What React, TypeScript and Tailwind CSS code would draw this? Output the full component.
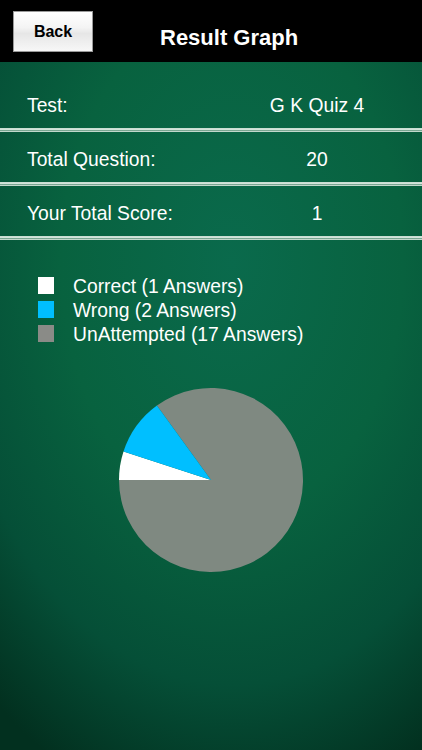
import React from 'react';

const rows = [
  { label: 'Test:', value: 'G K Quiz 4' },
  { label: 'Total Question:', value: '20' },
  { label: 'Your Total Score:', value: '1' },
];

const legend = [
  { color: 'bg-white', text: 'Correct (1 Answers)' },
  { color: 'bg-[#00bfff]', text: 'Wrong (2 Answers)' },
  { color: 'bg-[#8a8b87]', text: 'UnAttempted (17 Answers)' },
];

function PieChart() {
  // center 93,93 radius 92; white 180..162deg, blue 162..126deg, grey the rest
  return (
    <svg width="186" height="186" viewBox="0 0 186 186" className="mx-auto block">
      <path d="M93 93 L38.9 18.6 A92 92 0 1 1 1 93 Z" fill="#7f8981" />
      <path d="M93 93 L1 93 A92 92 0 0 1 5.5 64.6 Z" fill="#ffffff" />
      <path d="M93 93 L5.5 64.6 A92 92 0 0 1 38.9 18.6 Z" fill="#00bfff" />
    </svg>
  );
}

export default function App() {
  return (
    <div
      className="h-screen w-full overflow-hidden flex flex-col bg-[radial-gradient(ellipse_90%_75%_at_55%_35%,#0a6a4c_0%,#08623f_45%,#054f37_75%,#02301f_100%)] text-white"
      style={{ fontFamily: '"Liberation Sans", Arial, sans-serif' }}
    >
      {/* header */}
      <div className="h-[62px] bg-black flex items-start shrink-0">
        <button className="mt-[11px] ml-[13px] w-[80px] h-[41px] border border-[#9a9a9a] bg-[linear-gradient(to_bottom,#ffffff_0%,#f4f4f4_40%,#e6e6e6_55%,#f7f7f7_100%)] text-black font-bold text-[16px] leading-[40px] pb-[2px]">
          Back
        </button>
        <h1 className="mt-[25px] ml-[67px] text-[22px] leading-[26px] font-bold">Result Graph</h1>
      </div>

      {/* info rows */}
      <div className="pt-[16px]">
        {rows.map((r) => (
          <div key={r.label}>
            <div className="flex h-[50px] pt-[17px] text-[19.3px] leading-[22px]">
              <div className="w-[242px] pl-[27px]">{r.label}</div>
              <div className="w-[150px] text-center">{r.value}</div>
            </div>
            <div className="h-[4px] bg-[linear-gradient(to_bottom,#c4dbcf_0%,#d6e6dd_45%,#6e9e88_60%,#c9ddd2_80%,#b3cfc1_100%)]" />
          </div>
        ))}
      </div>

      {/* legend */}
      <div className="mt-[35px] pl-[38px] flex flex-col">
        {legend.map((l) => (
          <div key={l.text} className="flex items-start h-[24px]">
            <span className={`${l.color} w-[16px] h-[17px] mt-[2px] shrink-0`} />
            <span className="ml-[19px] text-[19.3px] leading-[24px]">{l.text}</span>
          </div>
        ))}
      </div>

      {/* chart */}
      <div className="mt-[40px]">
        <PieChart />
      </div>
    </div>
  );
}
